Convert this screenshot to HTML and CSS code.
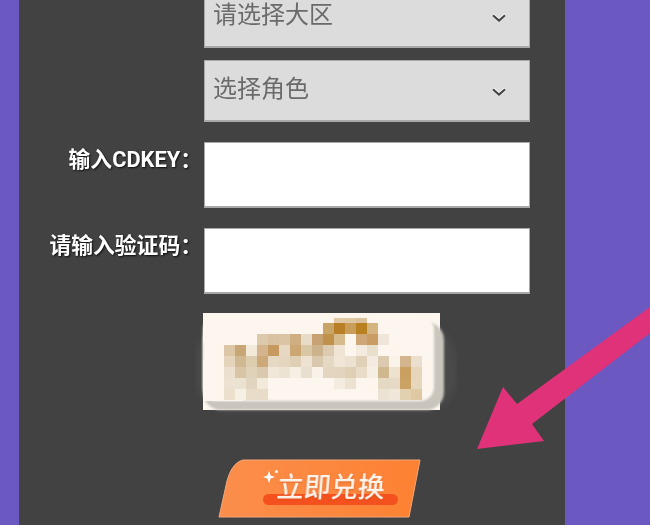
FILE: index.html
```html
<!DOCTYPE html>
<html lang="zh-CN">
<head>
<meta charset="utf-8">
<title>CDKEY 兑换</title>
<link rel="stylesheet" href="styles.css">
</head>
<body>
<main class="panel">
  <form class="form">
    <div class="row">
      <div class="field select-wrap">
        <select class="select" aria-label="请选择大区"><option>请选择大区</option></select>
        <svg class="chevron" viewBox="0 0 14 8" aria-hidden="true"><path d="M1 1.2 7 6.6 13 1.2"/></svg>
      </div>
    </div>
    <div class="row">
      <div class="field select-wrap">
        <select class="select" aria-label="选择角色"><option>选择角色</option></select>
        <svg class="chevron" viewBox="0 0 14 8" aria-hidden="true"><path d="M1 1.2 7 6.6 13 1.2"/></svg>
      </div>
    </div>
    <div class="row">
      <label class="label" for="cdkey">输入CDKEY：</label>
      <input class="field input" id="cdkey" type="text">
    </div>
    <div class="row">
      <label class="label" for="code">请输入验证码：</label>
      <input class="field input" id="code" type="text">
    </div>
    <div class="row row-captcha">
      <svg class="captcha" viewBox="195 306 262 110" role="img" aria-label="验证码图片">
        <rect class="halo" x="195" y="326" width="262" height="86" rx="34"/>
        <rect class="paper" x="203" y="313" width="237" height="97"/>
        <rect class="smear" x="203" y="322" width="241" height="88" rx="18"/>
        <rect class="paper-in" x="203" y="316" width="231" height="85" rx="14"/>
        <rect class="paper" x="203" y="313" width="60" height="30"/>
        <rect class="paper" x="203" y="360" width="40" height="41"/>
        <g class="pixels">
          <rect x="334" y="318" width="11" height="6" fill="#e0c8a4"/><rect x="345" y="318" width="11" height="6" fill="#dfc7a2"/><rect x="356" y="318" width="11" height="6" fill="#dcc09a"/>
          <rect x="323" y="323" width="11" height="11" fill="#c9a467"/><rect x="334" y="323" width="11" height="11" fill="#b87f27"/><rect x="345" y="323" width="11" height="11" fill="#c99c5a"/><rect x="356" y="323" width="11" height="11" fill="#b8801f"/><rect x="367" y="323" width="11" height="11" fill="#d4b47f"/>
          <rect x="257" y="334" width="11" height="11" fill="#dcc9ac"/><rect x="268" y="334" width="11" height="11" fill="#d9c2a2"/><rect x="279" y="334" width="11" height="11" fill="#dac4a4"/><rect x="290" y="334" width="11" height="11" fill="#cfae83"/><rect x="301" y="334" width="11" height="11" fill="#e8dcc8"/><rect x="312" y="334" width="11" height="11" fill="#c9a273"/><rect x="323" y="334" width="11" height="11" fill="#c0914a"/><rect x="334" y="334" width="11" height="11" fill="#d6bb8c"/><rect x="356" y="334" width="11" height="11" fill="#cda876"/><rect x="367" y="334" width="11" height="11" fill="#c89c63"/><rect x="378" y="334" width="11" height="11" fill="#efe6d9"/>
          <rect x="224" y="345" width="11" height="11" fill="#dcc6a6"/><rect x="235" y="345" width="11" height="11" fill="#c9a676"/><rect x="246" y="345" width="11" height="11" fill="#f3e9d9"/><rect x="257" y="345" width="11" height="11" fill="#d4b48c"/><rect x="268" y="345" width="11" height="11" fill="#c69a5f"/><rect x="279" y="345" width="11" height="11" fill="#e6d8c2"/><rect x="290" y="345" width="11" height="11" fill="#cba873"/><rect x="301" y="345" width="11" height="11" fill="#d9c7a5"/><rect x="312" y="345" width="11" height="11" fill="#cdb38c"/><rect x="323" y="345" width="11" height="11" fill="#dccbb0"/><rect x="334" y="345" width="11" height="11" fill="#f0e5d5"/><rect x="356" y="345" width="11" height="11" fill="#f3ebdf"/><rect x="367" y="345" width="11" height="11" fill="#e9dfcd"/>
          <rect x="224" y="356" width="11" height="11" fill="#e3d4bb"/><rect x="235" y="356" width="11" height="11" fill="#d0b893"/><rect x="246" y="356" width="11" height="11" fill="#dccdae"/><rect x="257" y="356" width="11" height="11" fill="#cda97a"/><rect x="268" y="356" width="11" height="11" fill="#e6d9c3"/><rect x="279" y="356" width="11" height="11" fill="#e3d5be"/><rect x="290" y="356" width="11" height="11" fill="#dfcfb5"/><rect x="301" y="356" width="11" height="11" fill="#ede2d1"/><rect x="312" y="356" width="11" height="11" fill="#d9c8ae"/><rect x="323" y="356" width="11" height="11" fill="#e5d9c5"/><rect x="334" y="356" width="11" height="11" fill="#f0e6d6"/><rect x="345" y="356" width="11" height="11" fill="#ede2d1"/><rect x="356" y="356" width="11" height="11" fill="#e0d0b8"/><rect x="367" y="356" width="11" height="11" fill="#f3ebdf"/><rect x="378" y="356" width="11" height="11" fill="#dccab0"/><rect x="389" y="356" width="11" height="11" fill="#f9f3e9"/><rect x="400" y="356" width="11" height="11" fill="#d2b58c"/><rect x="411" y="356" width="11" height="11" fill="#eadfcd"/>
          <rect x="224" y="367" width="11" height="11" fill="#ebe0cf"/><rect x="235" y="367" width="11" height="11" fill="#d8c5a6"/><rect x="246" y="367" width="11" height="11" fill="#e0d2b9"/><rect x="257" y="367" width="11" height="11" fill="#dbc9ae"/><rect x="268" y="367" width="11" height="11" fill="#f0e7d8"/><rect x="279" y="367" width="11" height="11" fill="#ede3d2"/><rect x="290" y="367" width="11" height="11" fill="#f6efe4"/><rect x="301" y="367" width="11" height="11" fill="#e9dfcf"/><rect x="312" y="367" width="11" height="11" fill="#f8f2e8"/><rect x="323" y="367" width="11" height="11" fill="#e3d5bf"/><rect x="334" y="367" width="11" height="11" fill="#e3d5bd"/><rect x="345" y="367" width="11" height="11" fill="#dfcfb4"/><rect x="356" y="367" width="11" height="11" fill="#e9ddca"/><rect x="367" y="367" width="11" height="11" fill="#f5eee2"/><rect x="378" y="367" width="11" height="11" fill="#cfb88f"/><rect x="389" y="367" width="11" height="11" fill="#ede2d0"/><rect x="400" y="367" width="11" height="11" fill="#c9a060"/><rect x="411" y="367" width="11" height="11" fill="#e5d5bb"/>
          <rect x="224" y="378" width="11" height="11" fill="#ede2d2"/><rect x="235" y="378" width="11" height="11" fill="#ece2d1"/><rect x="246" y="378" width="11" height="11" fill="#e2d5bf"/><rect x="257" y="378" width="11" height="11" fill="#f1e9da"/><rect x="334" y="378" width="11" height="11" fill="#f4ecdf"/><rect x="345" y="378" width="11" height="11" fill="#ece2d2"/><rect x="378" y="378" width="11" height="11" fill="#e6d9c3"/><rect x="389" y="378" width="11" height="11" fill="#e6dac6"/><rect x="400" y="378" width="11" height="11" fill="#c9a264"/><rect x="411" y="378" width="11" height="11" fill="#e6d6bc"/>
          <rect x="224" y="389" width="11" height="11" fill="#ecdfcc"/><rect x="235" y="389" width="11" height="11" fill="#f6efe4"/><rect x="246" y="389" width="11" height="11" fill="#e9dcc9"/><rect x="257" y="389" width="11" height="11" fill="#e8dcc8"/><rect x="378" y="389" width="11" height="11" fill="#ece2d3"/><rect x="389" y="389" width="11" height="11" fill="#efe7da"/><rect x="400" y="389" width="11" height="11" fill="#e3d0ae"/><rect x="411" y="389" width="11" height="11" fill="#dfc9a5"/>
        </g>
      </svg>
    </div>
    <div class="row row-submit">
      <button class="redeem" type="button">
        <svg class="redeem-bg" viewBox="0 0 204 60" aria-hidden="true">
          <defs>
            <linearGradient id="redeem-fill" x1="0" y1="0" x2="1" y2="0">
              <stop offset="0" stop-color="#fb8e4c"/>
              <stop offset="1" stop-color="#fd8132"/>
            </linearGradient>
          </defs>
          <path class="redeem-shape" d="M25 1H202L191 58H1L9 22C12 11 17 3 25 1Z" fill="url(#redeem-fill)"/>
          <rect class="redeem-pill" x="45" y="35" width="135" height="11" rx="5.5"/>
          <path class="redeem-spark" d="M51 12 52.600 16.400 57 18 52.600 19.600 51 24 49.400 19.600 45 18 49.400 16.400Z"/>
          <circle class="redeem-spark" cx="58.500" cy="12.500" r="1.500"/>
        </svg>
        <span class="redeem-text">立即兑换</span>
      </button>
    </div>
  </form>
</main>
<svg class="arrow" viewBox="0 0 650 525" aria-hidden="true">
  <path d="M650 307V333L532 424 544 441 477 449 503 387 517 404Z"/>
</svg>
</body>
</html>
```
FILE: styles.css
```css
* {
  box-sizing: border-box;
}

html,
body {
  height: 100%;
  margin: 0;
  overflow: hidden;
}

body {
  background: #6b58c0;
  font-family: Roboto, "Noto Sans CJK SC", sans-serif;
}

.panel {
  width: 546px;
  height: 525px;
  margin-left: 19px;
  overflow: hidden;
  background: #424242;
}

.form {
  margin-top: -14px;
}

.row {
  display: grid;
  grid-template-columns: 185px 326px;
  margin-bottom: 20px;
}

.row:first-child {
  margin-bottom: 12px;
}

.row-captcha {
  margin-top: -8px;
  margin-bottom: 43px;
}

.row-submit {
  margin-bottom: 0;
}

.label {
  grid-column: 1;
  margin-right: 2px;
  padding-top: 3px;
  color: #fff;
  font-size: 21.800px;
  font-weight: 700;
  line-height: 30px;
  text-align: right;
  white-space: nowrap;
  text-shadow: 1px 1px 2px rgba(0, 0, 0, 0.8);
  filter: blur(0.35px);
}

.field {
  grid-column: 2;
  width: 326px;
  border: 1px solid #a8a8a8;
  border-bottom-width: 2px;
}

.input {
  height: 66px;
  padding: 0 10px;
  background: #fff;
  border-radius: 0;
  outline: none;
}

.select-wrap {
  position: relative;
  height: 62px;
  background: #dcdcdc;
}

.select {
  display: block;
  width: 100%;
  height: 100%;
  padding: 0 40px 8px 8px;
  border: 0;
  background: transparent;
  color: #6a6a6a;
  font-family: "Noto Sans CJK SC", sans-serif;
  font-size: 24px;
  appearance: none;
  filter: blur(0.35px);
}

.chevron {
  position: absolute;
  top: 27px;
  right: 23px;
  width: 14px;
  height: 8px;
  fill: none;
  stroke: #444;
  stroke-width: 2;
  filter: drop-shadow(0 -1px 0 #fff);
}

.captcha {
  display: block;
  grid-column: 2;
  width: 262px;
  height: 110px;
  margin-left: -9px;
}

.halo {
  fill: #4a4a4a;
  filter: blur(3px);
}

.paper {
  fill: #fcf6ee;
}

.smear {
  fill: #c9c5bd;
  filter: blur(1px);
}

.paper-in {
  fill: #fcf6ee;
  filter: blur(1px);
}

.pixels {
  filter: blur(0.7px);
}

.redeem {
  position: relative;
  display: block;
  grid-column: 2;
  width: 204px;
  height: 60px;
  margin-left: 14px;
  padding: 0 0 6px 21px;
  border: 0;
  background: none;
}

.redeem-bg {
  position: absolute;
  top: 0;
  left: 0;
  width: 204px;
  height: 60px;
}

.redeem-shape {
  stroke: #f5a679;
  stroke-width: 1;
}

.redeem-pill {
  fill: #f4511e;
}

.redeem-spark {
  fill: #fff;
}

.redeem-text {
  position: relative;
  display: inline-block;
  color: #fff4ec;
  font-family: "Noto Sans CJK SC", sans-serif;
  font-size: 27px;
  font-weight: 500;
  line-height: 40px;
  text-shadow: 0 1px 2px rgba(190, 70, 20, 0.5);
  transform: skewX(-5deg);
  filter: blur(0.35px);
}

.arrow {
  position: absolute;
  top: 0;
  left: 0;
  width: 650px;
  height: 525px;
  fill: #e03278;
  pointer-events: none;
}
```
